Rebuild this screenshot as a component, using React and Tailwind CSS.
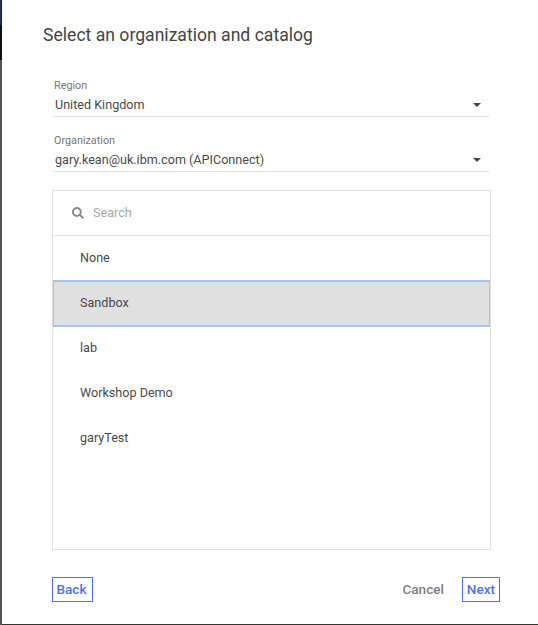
import { FaSearch } from "react-icons/fa";

const catalogs = ["None", "Sandbox", "lab", "Workshop Demo", "garyTest"];

const SelectField = ({ label, value, className }) => (
  <div className={`ml-[10px] mr-[11px] ${className}`}>
    <div className="text-[10.8px] leading-[13px] text-[#777] pl-[1px]">{label}</div>
    <div className="flex items-center justify-between h-[25px] border-b border-[#e0e0e0] pt-[2px] pl-[2px] pr-[8px]">
      <span className="text-[12.6px] text-[#4a4a4a]">{value}</span>
      <span className="w-0 h-0 border-x-[4px] border-x-transparent border-t-[4px] border-t-[#444]"></span>
    </div>
  </div>
);

const App = () => {
  return (
    <div className="flex w-[538px] h-[625px] bg-white font-['Roboto',sans-serif]">
      {/* page behind the dialog */}
      <div className="flex flex-col w-[2px] shrink-0 bg-[#555]">
        <div className="h-[25px] bg-[#1c2a66]"></div>
        <div className="h-[35px] bg-[#111]"></div>
      </div>

      <div className="flex-1 flex flex-col border-b border-[#333] pl-[41px] pr-[38px]">
        <h2 className="mt-[24px] text-[17.6px] leading-[22px] text-[#444]">Select an organization and catalog</h2>

        <SelectField label="Region" value="United Kingdom" className="mt-[33px]" />
        <SelectField label="Organization" value="gary.kean@uk.ibm.com (APIConnect)" className="mt-[17px]" />

        <div className="mx-[9px] mt-[18px] h-[360px] border border-[#e0e0e0]">
          <div className="flex items-center h-[45px] border-b border-[#e0e0e0] pl-[19px]">
            <FaSearch size={12} className="text-[#8a8a8a]" />
            <span className="ml-[9px] text-[12.6px] text-[#aaa]">Search</span>
          </div>
          {catalogs.map((name) =>
            name === "Sandbox" ? (
              <div
                key={name}
                className="flex items-center h-[47px] -my-[1px] relative bg-[#e0e0e0] border-x border-y-2 border-[#a6c2f7] pl-[26px] text-[12.6px] text-[#4a4a4a]"
              >
                {name}
              </div>
            ) : (
              <div key={name} className="flex items-center h-[45px] pl-[27px] text-[12.6px] text-[#4a4a4a]">
                {name}
              </div>
            )
          )}
        </div>

        <div className="flex items-center justify-between mt-[27px] ml-[9px]">
          <button className="w-[41px] h-[25px] pr-[2px] border border-[#4f6ff0] text-[13.6px] font-medium text-[#4f6ff0]">Back</button>
          <div className="flex items-center gap-[18px]">
            <button className="text-[13.6px] font-medium text-[#808080]">Cancel</button>
            <button className="w-[38px] h-[25px] border border-[#4f6ff0] text-[13.6px] font-medium text-[#4f6ff0]">Next</button>
          </div>
        </div>
      </div>
    </div>
  );
};

export default App;
